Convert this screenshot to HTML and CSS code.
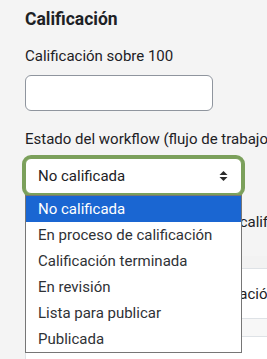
FILE: index.html
```html
<!DOCTYPE html>
<html>
<head>
    <title>Calificación</title>
    <link rel="stylesheet" href="styles.css">
</head>
<body>
    <div class="container">
        <h3 class="section-title">Calificación</h3>
        <div class="form-group">
            <label for="grade">Calificación sobre 100</label>
            <input type="text" id="grade" class="grade-input">
        </div>
        <div class="form-group">
            <label for="workflow">Estado del workflow (flujo de trabajo) de la calificación</label>
            <div class="select-wrap">
                <div class="select-box" id="workflow">
                    <span>No calificada</span>
                    <svg class="caret" width="9" height="12" viewBox="0 0 9 12">
                        <path d="M4.5 1 L8.5 5 L0.5 5 Z M4.5 11 L8.5 7 L0.5 7 Z" fill="#2b2b2b"/>
                    </svg>
                </div>
                <ul class="dropdown">
                    <li class="selected">No calificada</li>
                    <li>En proceso de calificación</li>
                    <li>Calificación terminada</li>
                    <li>En revisión</li>
                    <li>Lista para publicar</li>
                    <li>Publicada</li>
                </ul>
            </div>
        </div>
        <div class="form-group">
            <label>Calificación actual en el libro de calificaciones</label>
        </div>
        <div class="table-box">
            <div class="row head"></div>
            <div class="row body-row"><span>Retroalimentación</span></div>
            <div class="row alt"></div>
            <div class="row"></div>
        </div>
    </div>
</body>
</html>
```

FILE: styles.css
```css
html, body {
    margin: 0;
    height: 100%;
    overflow: hidden;
}
body {
    background-color: #f4f4f4;
    font-family: Roboto, "Liberation Sans", sans-serif;
    color: #1d2125;
}
.container {
    padding: 8px 0 0 25px;
}
.section-title {
    margin: 0 0 16px 0;
    font-size: 17.5px;
    line-height: 22px;
    font-weight: 700;
}
.form-group {
    margin-bottom: 18px;
}
.form-group label {
    display: block;
    font-size: 15px;
    line-height: 20px;
    margin-bottom: 9px;
    white-space: nowrap;
}
.grade-input {
    display: block;
    box-sizing: border-box;
    width: 188px;
    height: 36px;
    margin: 0;
    border: 1px solid #8f959e;
    border-radius: 6px;
    background-color: #fff;
}
.select-wrap {
    position: relative;
    width: 217px;
}
.select-box {
    box-sizing: border-box;
    height: 36px;
    display: flex;
    align-items: center;
    justify-content: space-between;
    padding: 0 13px 0 12px;
    background-color: #fff;
    border: 1px solid #7ba05b;
    border-radius: 6px;
    box-shadow: 0 0 0 3px #7ba05b;
    font-size: 15px;
}
.dropdown {
    position: absolute;
    top: 37px;
    left: 0;
    width: 217px;
    box-sizing: border-box;
    margin: 0;
    padding: 0;
    list-style: none;
    background-color: #fff;
    border: 1px solid #767676;
    z-index: 1;
}
.dropdown li {
    height: 26px;
    line-height: 26px;
    padding-left: 12px;
    font-size: 15px;
    color: #2f3236;
    white-space: nowrap;
}
.dropdown li.selected {
    background-color: #1a66d2;
    color: #fff;
}
.table-box {
    margin-top: 24px;
    background-color: #fff;
    border-left: 1px solid #dee2e6;
}
.row {
    border-bottom: 1px solid #dee2e6;
}
.row.head {
    height: 12px;
    background-color: #f2f2f2;
}
.row.body-row {
    height: 49px;
    display: flex;
    align-items: center;
    font-size: 15px;
    padding-left: 128px;
}
.row.alt {
    height: 17px;
    background-color: #f7f7f7;
}
.row:last-child {
    height: 30px;
}
```
